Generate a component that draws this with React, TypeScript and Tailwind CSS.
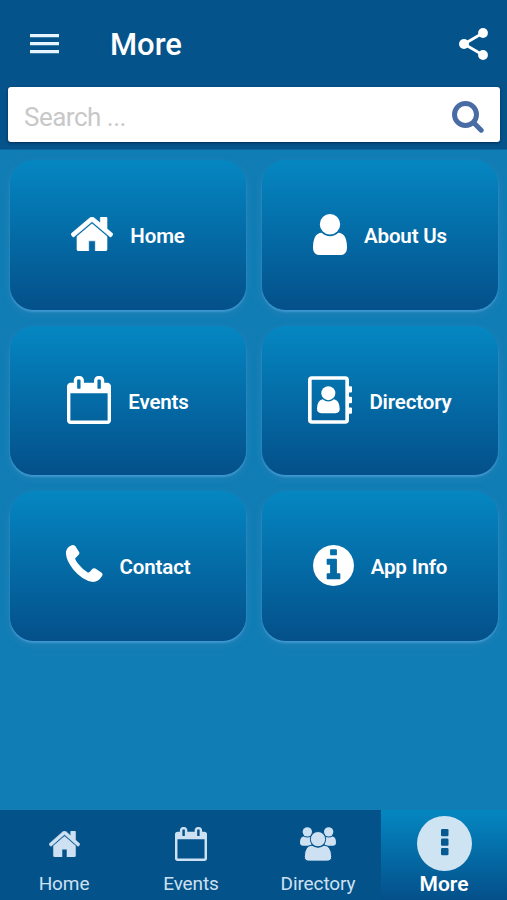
import React from "react";

type IconProps = { className: string };

const HomeIcon: React.FC<IconProps> = ({ className }) => (
    <svg viewBox="89 253 1614 1283" preserveAspectRatio="none" fill="currentColor" className={className}>
        <path d="M1472 992v480q0 26-19 45t-45 19h-384v-384h-256v384h-384q-26 0-45-19t-19-45v-480q0-1 .5-3t.5-3l575-474 575 474q1 2 1 6zm223-69l-62 74q-8 9-21 11h-3q-13 0-21-7l-692-577-692 577q-12 8-24 7-13-2-21-11l-62-74q-8-10-7-23.5t11-21.5l719-599q32-26 76-26t76 26l244 204v-195q0-14 9-23t23-9h192q14 0 23 9t9 23v408l219 182q10 8 11 21.5t-7 23.5z" stroke="currentColor" strokeWidth="24" />
    </svg>
);

const UserIcon: React.FC<IconProps> = ({ className }) => (
    <svg viewBox="256 128 1280 1536" preserveAspectRatio="none" fill="currentColor" className={className}>
        <path d="M1536 1399q0 109-62.5 187t-150.5 78h-854q-88 0-150.5-78t-62.5-187q0-85 8.5-160.5t31.5-152 58.5-131 94-89 134.5-34.5q131 128 313 128t313-128q76 0 134.5 34.5t94 89 58.5 131 31.5 152 8.5 160.5zm-256-887q0 159-112.5 271.5t-271.5 112.5-271.5-112.5-112.5-271.5 112.5-271.5 271.5-112.5 271.5 112.5 112.5 271.5z" />
    </svg>
);

const CalendarIcon: React.FC<IconProps> = ({ className }) => (
    <svg viewBox="64 0 1664 1792" preserveAspectRatio="none" fill="currentColor" className={className}>
        <path d="M192 1664h1408v-1024h-1408v1024zm384-1216v-288q0-14-9-23t-23-9h-64q-14 0-23 9t-9 23v288q0 14 9 23t23 9h64q14 0 23-9t9-23zm768 0v-288q0-14-9-23t-23-9h-64q-14 0-23 9t-9 23v288q0 14 9 23t23 9h64q14 0 23-9t9-23zm384-64v1280q0 52-38 90t-90 38h-1408q-52 0-90-38t-38-90v-1280q0-52 38-90t90-38h128v-96q0-66 47-113t113-47h64q66 0 113 47t47 113v96h384v-96q0-66 47-113t113-47h64q66 0 113 47t47 113v96h128q52 0 90 38t38 90z" />
    </svg>
);

const BookIcon: React.FC<IconProps> = ({ className }) => (
    <svg viewBox="0 0 132 143" fill="currentColor" className={className}>
        <rect x="5.5" y="5.5" width="112" height="132" rx="6" fill="none" stroke="currentColor" strokeWidth="11" />
        <path d="M121 30h8q3 0 3 3v13q0 3-3 3h-8zM121 62h8q3 0 3 3v13q0 3-3 3h-8zM121 94h8q3 0 3 3v13q0 3-3 3h-8z" />
        <circle cx="61" cy="51" r="21" />
        <path d="M44 69Q28 72 27 97Q27 111 40 111H83Q96 110 95 97Q94 72 78 69Q61 83 44 69z" />
    </svg>
);

const PhoneIcon: React.FC<IconProps> = ({ className }) => (
    <svg viewBox="0 0 112 112" fill="currentColor" className={className}>
        <path d="M14 2Q22-2 28 3L40 22Q42 27 37 31L28 40Q27 44 36 56Q50 74 66 83Q70 84 73 80L80 72Q84 69 89 71L108 84Q113 89 109 94Q98 112 82 112Q50 108 22 74Q-2 44 0 20Q3 7 14 2z" />
    </svg>
);

const InfoIcon: React.FC<IconProps> = ({ className }) => (
    <svg viewBox="128 128 1536 1536" fill="currentColor" className={className}>
        <path d="M1152 1376v-160q0-14-9-23t-23-9h-96v-512q0-14-9-23t-23-9h-320q-14 0-23 9t-9 23v160q0 14 9 23t23 9h96v320h-96q-14 0-23 9t-9 23v160q0 14 9 23t23 9h448q14 0 23-9t9-23zm-128-896v-160q0-14-9-23t-23-9h-192q-14 0-23 9t-9 23v160q0 14 9 23t23 9h192q14 0 23-9t9-23zm640 416q0 209-103 385.5t-279.5 279.5-385.5 103-385.5-103-279.5-279.5-103-385.5 103-385.5 279.5-279.5 385.5-103 385.5 103 279.5 279.5 103 385.5z" />
    </svg>
);

const GroupIcon: React.FC<IconProps> = ({ className }) => (
    <svg viewBox="0 0 108 101" fill="currentColor" className={className}>
        <circle cx="22" cy="14" r="14" />
        <circle cx="86" cy="14" r="14" />
        <path d="M11 28Q22 34 34 28V56H10Q0 56 0 46Q0 30 11 28zM97 28Q86 34 74 28V56H98Q108 56 108 46Q108 30 97 28z" />
        <g stroke="#04528a" strokeWidth="3">
            <path d="M36 54Q14 55 13 88Q13 102 27 102H81Q95 102 95 88Q94 55 72 54Q54 66 36 54z" />
            <circle cx="54" cy="36" r="23" />
        </g>
    </svg>
);

const cards = [
    { label: "Home", Icon: HomeIcon, size: "w-[42px] h-[34px] -mt-0.5" },
    { label: "About Us", Icon: UserIcon, size: "w-[34px] h-[41px]" },
    { label: "Events", Icon: CalendarIcon, size: "w-[44px] h-[48px]" },
    { label: "Directory", Icon: BookIcon, size: "w-[44px] h-[48px]" },
    { label: "Contact", Icon: PhoneIcon, size: "w-[37px] h-[37px] -mt-1" },
    { label: "App Info", Icon: InfoIcon, size: "w-[41px] h-[41px]" },
];

const tabs = [
    { label: "Home", Icon: HomeIcon, size: "w-[31px] h-[26px]" },
    { label: "Events", Icon: CalendarIcon, size: "w-[32px] h-[34px]" },
    { label: "Directory", Icon: GroupIcon, size: "w-[36px] h-[34px]" },
];

const App: React.FC = () => {
    return (
        <div className="flex flex-col w-[507px] h-[900px] bg-[#117db5] font-['Roboto',sans-serif] overflow-hidden">
            <header className="h-[150px] shrink-0 bg-[#04538a] border-b border-[#0b669e] px-2">
                <div className="flex items-center h-[87px] pl-[22px] pr-[11px]">
                    <svg viewBox="0 0 29 20" fill="#e8f4ff" className="w-[29px] h-5">
                        <path d="M0 0h29v3.2H0zM0 8h29v3.2H0zM0 16h29v3.2H0z" />
                    </svg>
                    <h1 className="ml-[51px] mt-[3px] text-[31px] leading-8 font-medium text-white">More</h1>
                    <svg viewBox="0 0 29 32" fill="white" className="ml-auto w-[29px] h-8">
                        <path d="M24 5L5 16L24 27" fill="none" stroke="white" strokeWidth="2.8" />
                        <circle cx="24" cy="5" r="4.9" />
                        <circle cx="5" cy="16" r="5" />
                        <circle cx="24" cy="27" r="4.9" />
                    </svg>
                </div>
                <div className="flex items-center justify-between h-[55px] w-[492px] bg-white rounded-[3px] pl-4 pr-4 shadow-[0_1px_3px_rgba(0,20,50,0.6)]">
                    <span className="text-[26px] leading-8 tracking-[-0.5px] text-[#c8c8c8] mt-1">Search ...</span>
                    <svg viewBox="0 0 32 32" fill="none" stroke="#4a6ca5" className="w-8 h-8 mt-1">
                        <circle cx="13.5" cy="13.5" r="11" strokeWidth="5" />
                        <path d="M22 22L29.2 29.2" strokeWidth="5" strokeLinecap="round" />
                    </svg>
                </div>
            </header>

            <main className="grow px-[10px] pt-[10px]">
                <div className="grid grid-cols-[236px_236px] gap-x-4 gap-y-4 auto-rows-[149.5px]">
                    {cards.map(({ label, Icon, size }) => (
                        <div key={label} className="flex items-center justify-center gap-[17px] rounded-[24px] bg-linear-to-b from-[#0587c2] to-[#04508a] shadow-[0_2px_2px_0px_rgba(75,160,218,0.75),0_3px_7px_1px_rgba(70,140,185,0.3)] text-white">
                            <Icon className={size} />
                            <span className="text-[20.5px] leading-6 tracking-[-0.15px] font-semibold mt-[3px]">{label}</span>
                        </div>
                    ))}
                </div>
            </main>

            <nav className="flex h-[90px] shrink-0 bg-[#04528a]">
                {tabs.map(({ label, Icon, size }) => (
                    <div key={label} className="flex flex-col items-center w-[127px] pl-px text-[#cde1f3]">
                        <div className="flex items-center h-[68px]">
                            <Icon className={size} />
                        </div>
                        <span className="-mt-[6px] text-[19px] leading-6 tracking-[-0.1px]">{label}</span>
                    </div>
                ))}
                <div className="flex flex-col items-center grow pt-[6px] bg-linear-to-b from-[#0587c2] to-[#04508a]">
                    <svg viewBox="0 0 55 55" fill="#cfe4f2" className="w-[55px] h-[55px]">
                        <circle cx="27.5" cy="27.5" r="27.5" />
                        <g fill="#075a91">
                            <rect x="24" y="13" width="7.5" height="7.2" rx="1.3" />
                            <rect x="24" y="22.5" width="7.5" height="7.2" rx="1.3" />
                            <rect x="24" y="32" width="7.5" height="7.2" rx="1.3" />
                        </g>
                    </svg>
                    <span className="mt-px text-[21px] leading-6 font-semibold text-white">More</span>
                </div>
            </nav>
        </div>
    );
};

export default App;
